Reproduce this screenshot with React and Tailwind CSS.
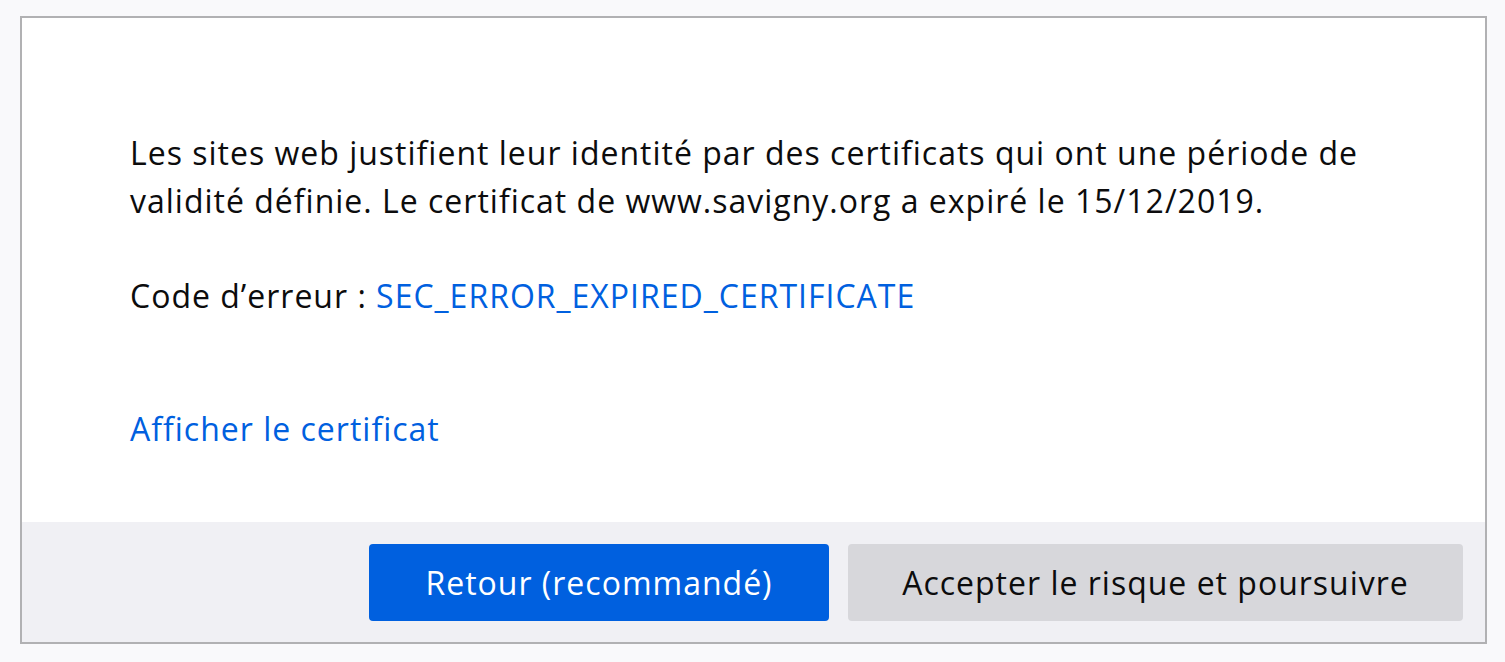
import React from "react";

const App = () => {
  return (
    <div className="min-h-screen bg-[#f9f9fb] pt-4 pl-5 font-['Open_Sans',sans-serif] text-[#0c0c0d]">
      <div className="w-[1467px] h-[628px] border-2 border-[#b1b1b3] bg-white flex flex-col">
        {/* error text */}
        <div className="flex-1 pl-[108px] pt-[111px] text-[32px] leading-[48px] tracking-[1px]">
          <p className="w-[1235px]">
            Les sites web justifient leur identité par des certificats qui ont une période de
            validité définie. Le certificat de www.savigny.org a expiré le 15/12/2019.
          </p>
          <p className="mt-[47px]">
            Code d’erreur : <a className="text-[#0060df]">SEC_ERROR_EXPIRED_CERTIFICATE</a>
          </p>
          <p className="mt-[85px]">
            <a className="text-[#0060df]">Afficher le certificat</a>
          </p>
        </div>

        {/* buttons */}
        <div className="h-[120px] bg-[#f0f0f4] flex justify-end gap-[19px] pt-[22px] pr-[22px]">
          <button className="w-[460px] h-[77px] rounded-[4px] bg-[#0060df] text-white text-[32px] tracking-[1px]">
            Retour (recommandé)
          </button>
          <button className="w-[615px] h-[77px] rounded-[4px] bg-[#d7d7db] text-[#0c0c0d] text-[32px] tracking-[1px]">
            Accepter le risque et poursuivre
          </button>
        </div>
      </div>
    </div>
  );
};

export default App;
